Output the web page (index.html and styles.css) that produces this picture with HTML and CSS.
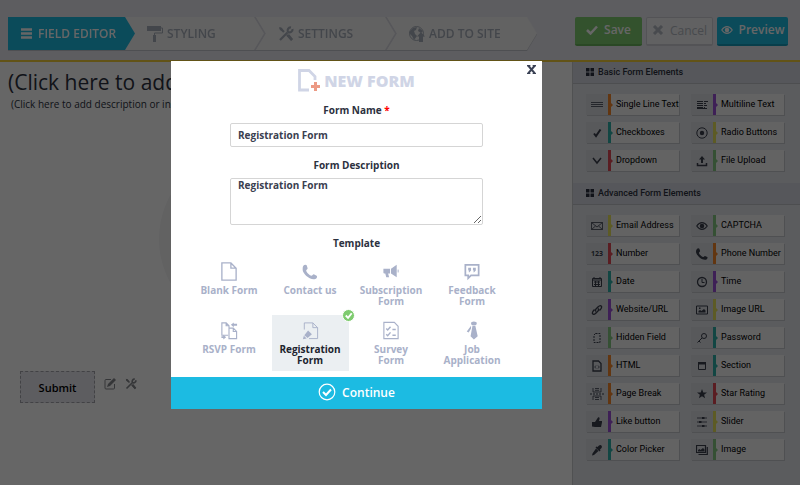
FILE: index.html
```
<!DOCTYPE html>
<html lang="en">
<head>
  <meta charset="UTF-8">
  <meta name="viewport" content="width=device-width, initial-scale=1.0">
  <title>New Form</title>
  <link rel="stylesheet" href="styles.css">
</head>
<body>
  <!-- Icons used more than once -->
  <svg class="sprite" width="0" height="0">
    <symbol id="tools" viewBox="0 0 16 16">
      <path d="M2 14l8-8M10 6a3 3 0 0 1 3-4.500M10 6a3 3 0 0 0 4.500-3M2 2l4 4M9 9l5 5" fill="none" stroke="currentColor" stroke-width="2.200"/>
      <path d="M1 1l3 1 1 2-1 1-2-1zM9 10l2-2 4 5-2 2z" fill="currentColor"/>
    </symbol>
    <symbol id="grid" viewBox="0 0 8 8"><path d="M0 0h3.500v3.500H0zM4.500 0H8v3.500H4.500zM0 4.500h3.500V8H0zM4.500 4.500H8V8H4.500z" fill="currentColor"/></symbol>
    <symbol id="phone" viewBox="0 0 16 16"><path d="M1 1.500C2 0 4 0 4.500 1l1 3c0 1-1.500 1.500-1.500 2.500 0 2 4 5.500 5.500 5.500 1 0 1.500-1.500 2.500-1.500l3 1.500c1 1 0 3-1.500 3.500C7.500 17 0 9 0 5c0-1.500.3-2.700 1-3.500z" fill="currentColor"/></symbol>
    <symbol id="eye" viewBox="0 0 16 12"><path d="M1 6c4-6 10-6 14 0-4 6-10 6-14 0z" fill="none" stroke="currentColor" stroke-width="1.500"/><circle cx="8" cy="6" r="3" fill="currentColor"/></symbol>
  </svg>

  <header class="topbar">
    <nav class="steps">
      <a href="#" class="step active">
        <svg class="step-icon icon-bars" viewBox="0 0 11 11"><path d="M0 1.500h11M0 5.500h11M0 9.500h11" stroke="currentColor" stroke-width="2.500"/></svg>
        FIELD EDITOR
      </a>
      <a href="#" class="step">
        <svg class="step-icon" viewBox="0 0 16 16"><path d="M0 0h14v5H0z" fill="currentColor"/><path d="M14 2h1.500v5H7.500v3" fill="none" stroke="currentColor"/><path d="M6 9h3v7H6z" fill="currentColor"/></svg>
        STYLING
      </a>
      <a href="#" class="step">
        <svg class="step-icon"><use href="#tools"/></svg>
        SETTINGS
      </a>
      <a href="#" class="step last">
        <svg class="step-icon" viewBox="0 0 16 16"><circle cx="7.500" cy="7.500" r="7" fill="none" stroke="currentColor"/><path d="M1 5l3-3 4-1-1 3-2 1 1 3 2 2-3 4-2-4-3-3zM10 2l4 3-2 2-3-2z" fill="currentColor"/><path d="M12 6l4 4.500h-2V16h-4v-5.500H8z" fill="currentColor"/></svg>
        ADD TO SITE
      </a>
    </nav>
    <div class="actions">
      <button type="button" class="btn save"><svg viewBox="0 0 12 10"><path d="M1 5l3.500 3.500L11 1.500" fill="none" stroke="currentColor" stroke-width="2.500"/></svg>Save</button>
      <button type="button" class="btn cancel"><svg viewBox="0 0 12 10"><path d="M2 1l8 8M10 1L2 9" stroke="currentColor" stroke-width="3"/></svg>Cancel</button>
      <button type="button" class="btn preview"><svg><use href="#eye"/></svg>Preview</button>
    </div>
  </header>

  <div class="workspace">
    <main class="canvas">
      <h1>(Click here to add title)</h1>
      <p>(Click here to add description or instructions)</p>
      <div class="drop-hint"></div>
      <div class="submit-row">
        <button type="button" class="submit">Submit</button>
        <svg viewBox="0 0 12 12"><path d="M7 1.500H2Q1 1.500 1 2.500V10q0 1 1 1h7.500q1 0 1-1V6" fill="none" stroke="currentColor"/><path d="M10 0l2 2-6 6-3 1 1-3z" fill="currentColor"/></svg>
        <svg><use href="#tools"/></svg>
      </div>
    </main>

    <aside class="sidebar">
      <h2><svg><use href="#grid"/></svg>Basic Form Elements</h2>
      <div class="elements">
        <button type="button" class="element orange"><span class="icon"><svg viewBox="0 0 12 12"><path d="M0 3.500h12M0 5.500h12M0 7.500h12" stroke="currentColor" stroke-width=".8"/></svg></span><span class="name">Single Line Text</span></button>
        <button type="button" class="element purple"><span class="icon"><svg viewBox="0 0 12 12"><path d="M1 2.500h6M8 2.500h4M1 4.500h6M8 4.500h2M1 6.500h6M8 6.500h3M1 8.500h6M8 8.500h1M1 9.500h10" stroke="currentColor"/></svg></span><span class="name">Multiline Text</span></button>
        <button type="button" class="element teal"><span class="icon"><svg viewBox="0 0 12 12"><path d="M3 6.500l2 2.500 4.500-6.500" fill="none" stroke="currentColor" stroke-width="2"/></svg></span><span class="name">Checkboxes</span></button>
        <button type="button" class="element yellow"><span class="icon"><svg viewBox="0 0 12 12"><circle cx="6" cy="6" r="5.200" fill="none" stroke="currentColor"/><circle cx="6" cy="6" r="2.200" fill="currentColor"/></svg></span><span class="name">Radio Buttons</span></button>
        <button type="button" class="element red"><span class="icon"><svg viewBox="0 0 12 12"><path d="M2 3l4 5 4-5" fill="none" stroke="currentColor" stroke-width="1.500"/></svg></span><span class="name">Dropdown</span></button>
        <button type="button" class="element green"><span class="icon"><svg viewBox="0 0 12 12"><path d="M6 1l3 3.500H7V8H5V4.500H3z" fill="currentColor"/><path d="M1.500 8v2.500h9V8" fill="none" stroke="currentColor" stroke-width="1.500"/></svg></span><span class="name">File Upload</span></button>
      </div>

      <h2><svg><use href="#grid"/></svg>Advanced Form Elements</h2>
      <div class="elements">
        <button type="button" class="element yellow"><span class="icon"><svg viewBox="0 0 12 12"><path d="M.5 2.500h11v7H.5zM.5 2.500L6 7l5.500-4.500M.5 9.500L4.500 6M11.500 9.500L7.500 6" fill="none" stroke="currentColor" stroke-width=".8"/></svg></span><span class="name">Email Address</span></button>
        <button type="button" class="element green"><span class="icon"><svg><use href="#eye"/></svg></span><span class="name">CAPTCHA</span></button>
        <button type="button" class="element red"><span class="icon digits">123</span><span class="name">Number</span></button>
        <button type="button" class="element orange"><span class="icon"><svg><use href="#phone"/></svg></span><span class="name">Phone Number</span></button>
        <button type="button" class="element teal"><span class="icon"><svg viewBox="0 0 12 12"><path d="M1.500 2.500h9v8h-9zM1 4h10M3 1v2M9 1v2M3 6h6M3 8.500h6" fill="none" stroke="currentColor"/><path d="M4.500 5v5M7.500 5v5" stroke="currentColor"/></svg></span><span class="name">Date</span></button>
        <button type="button" class="element purple"><span class="icon"><svg viewBox="0 0 12 12"><circle cx="6" cy="6" r="4.500" fill="none" stroke="currentColor" stroke-width="1.300"/><path d="M6 3v3.500h2.500" fill="none" stroke="currentColor"/></svg></span><span class="name">Time</span></button>
        <button type="button" class="element purple"><span class="icon"><svg viewBox="0 0 12 12"><path d="M5 7.500C3.500 6 5 5 7 3s3-1.500 3.500-.5S10 5 8.500 6.500M7 4.500C8.500 6 7 7 5 9s-3 1.500-3.500.5S2 7 3.500 5.500" fill="none" stroke="currentColor" stroke-width="1.400"/></svg></span><span class="name">Website/URL</span></button>
        <button type="button" class="element yellow"><span class="icon"><svg viewBox="0 0 12 12"><path d="M.5 2h11v8H.5z" fill="none" stroke="currentColor"/><path d="M2.500 8.500V7l1.500-1 1.500 1L8 5l1.500 1.500v2zM3 3.500h1.500V5H3z" fill="currentColor"/></svg></span><span class="name">Image URL</span></button>
        <button type="button" class="element green"><span class="icon"><svg viewBox="0 0 12 12"><path d="M4.500 1.500H9v9H3V3z" fill="none" stroke="currentColor" stroke-dasharray="2 1"/></svg></span><span class="name">Hidden Field</span></button>
        <button type="button" class="element teal"><span class="icon"><svg viewBox="0 0 12 12"><circle cx="8" cy="4" r="2.500" fill="none" stroke="currentColor"/><path d="M6 6l-4.500 4.500M3 9l1.500 1.500" stroke="currentColor"/></svg></span><span class="name">Password</span></button>
        <button type="button" class="element orange"><span class="icon"><svg viewBox="0 0 12 12"><path d="M2 1h5.500L10 3.500V11H2z" fill="none" stroke="currentColor" stroke-width="1.300"/><path d="M5 5.500L3.700 7 5 8.500M7 5.500L8.300 7 7 8.500" fill="none" stroke="currentColor" stroke-width=".8"/></svg></span><span class="name">HTML</span></button>
        <button type="button" class="element teal"><span class="icon"><svg viewBox="0 0 12 12"><path d="M2.500 2.500h7v7h-7z" fill="none" stroke="currentColor"/><path d="M2 2h8v2.500H2z" fill="currentColor"/></svg></span><span class="name">Section</span></button>
        <button type="button" class="element orange"><span class="icon"><svg class="wide" viewBox="0 0 14 12"><path d="M3 0v4h8V0M5 .5h4M5 2.300h4M3 12V8h8v4M5 9.500h4M5 11.500h4" fill="none" stroke="currentColor" stroke-width=".8"/><path d="M0 6h14" stroke="currentColor" stroke-dasharray="2 1"/></svg></span><span class="name">Page Break</span></button>
        <button type="button" class="element red"><span class="icon"><svg viewBox="0 0 12 12"><path d="M6 1l1.300 3.400 3.700.1-2.900 2.300 1 3.500L6 8.200l-3.100 2.100 1-3.500L1 4.500l3.700-.1z" fill="currentColor"/></svg></span><span class="name">Star Rating</span></button>
        <button type="button" class="element purple"><span class="icon"><svg viewBox="0 0 12 12"><path d="M1 6h3l3-4.500c1-.8 2 0 1.500 1.500L8 5h3v1.500L10 11H4L1 10.500z" fill="currentColor"/></svg></span><span class="name">Like button</span></button>
        <button type="button" class="element yellow"><span class="icon"><svg viewBox="0 0 12 12"><path d="M1 2h10M1 6h10M1 10h10" stroke="currentColor" stroke-width=".8"/><path d="M6 1h2.500v2H6zM3 5h2.500v2H3zM6 9h2.500v2H6z" fill="currentColor"/></svg></span><span class="name">Slider</span></button>
        <button type="button" class="element teal"><span class="icon"><svg viewBox="0 0 12 12"><path d="M8 1.500c1.500-1.500 4 .5 2.500 2.500L9 5.500l.5 1-1 1-4-4 1-1 1 .5zM5 4.500L7.500 7 3 11l-2 .5.500-2z" fill="currentColor"/></svg></span><span class="name">Color Picker</span></button>
        <button type="button" class="element green"><span class="icon"><svg viewBox="0 0 12 12"><path d="M.5 1.500h9v7h-9zM11.300 3v7.500H2.500" fill="none" stroke="currentColor" stroke-width="1.200"/><path d="M2 7.500V6l1.500-1 1 1L7 4l1.500 1.500v2z" fill="currentColor"/></svg></span><span class="name">Image</span></button>
      </div>
    </aside>
  </div>

  <div class="overlay"></div>

  <!-- New form popup -->
  <form class="modal">
    <button type="button" class="close" aria-label="Close"><svg viewBox="0 0 8 8"><path d="M1 .5l6 7M7 .5l-6 7" stroke="currentColor" stroke-width="1.800"/><path d="M0 .5h3M5 .5h3M0 7.500h3M5 7.500h3" stroke="currentColor"/></svg></button>
    <h2 class="modal-title">
      <svg viewBox="0 0 22 23"><path d="M11 21H1.500V1.500H11l6 6V11" fill="none" stroke="#d0d5e6" stroke-width="2.800"/><path d="M13 17.500h9M17.500 13v9" stroke="#ec9a84" stroke-width="3"/></svg>
      NEW FORM
    </h2>
    <label for="form-name">Form Name <span class="required">*</span></label>
    <input type="text" id="form-name" value="Registration Form">
    <label for="form-description">Form Description</label>
    <textarea id="form-description">Registration Form</textarea>
    <h3>Template</h3>
    <div class="templates">
      <button type="button" class="template">
        <svg viewBox="0 0 18 20"><path d="M1.500 1h9.500l5.500 5.500V19h-15zM11 1v5.500h5.500" fill="none" stroke="currentColor" stroke-width="1.400"/></svg>
        Blank Form
      </button>
      <button type="button" class="template">
        <svg viewBox="0 0 18 20"><use href="#phone" x="1" y="2" width="16" height="17"/></svg>
        Contact us
      </button>
      <button type="button" class="template">
        <svg viewBox="0 0 18 20"><path d="M1 7h7v5H6l1 4H4l-1-4H2q-1 0-1-1zM9 7l6-4v13l-6-4z" fill="currentColor"/><path d="M16.500 8v3" stroke="currentColor"/></svg>
        Subscription Form
      </button>
      <button type="button" class="template">
        <svg viewBox="0 0 18 20"><path d="M2 3h14v11H8l-3 3v-3H2z" fill="none" stroke="currentColor" stroke-width="1.800"/><path d="M5 6h3v3l-2 2-.5-.5.500-1.500H5zM10 6h3v3l-2 2-.5-.5.500-1.500H10z" fill="currentColor"/></svg>
        Feedback Form
      </button>
      <button type="button" class="template">
        <svg viewBox="0 0 18 20"><path d="M8 15H1.500V2H6l3 3v2M6 2v3h3M9 7.500h4.500L17 11v7.500H9zM13.500 7.500V11H17" fill="none" stroke="currentColor" stroke-width="1.200"/><path d="M11 4l3-2.500V3h3.500v2H14v1.500zM6 17l-3 2.500V18H1v-2h2v-1.500z" fill="currentColor"/></svg>
        RSVP Form
      </button>
      <button type="button" class="template selected">
        <svg viewBox="0 0 18 20"><path d="M3 9V2h9l5 5v11.500H8M12 2v5h5" fill="none" stroke="currentColor"/><path d="M7 10l4 4-4.500 4L3 15zM2.500 15.500l3 3-4 .8z" fill="currentColor"/></svg>
        Registration Form
        <span class="check"><svg viewBox="0 0 12 12"><path d="M3 6l2.500 2.500 4-5" fill="none" stroke="#fff" stroke-width="2"/></svg></span>
      </button>
      <button type="button" class="template">
        <svg viewBox="0 0 18 20"><path d="M1.500 1.500h11l4 4v13h-15z" fill="none" stroke="currentColor" stroke-width="1.200"/><path d="M4 8l1.500 1.500L8.500 6M4 14l1.500 1.500L8.500 12M10.500 9h3.500M10.500 15h3.500" fill="none" stroke="currentColor" stroke-width="1.500"/></svg>
        Survey Form
      </button>
      <button type="button" class="template">
        <svg viewBox="0 0 18 20"><ellipse cx="11" cy="2.500" rx="3" ry="2" fill="currentColor"/><path d="M9.500 5h3l2.500 11-4 3.500L7.500 16zM8 5L3.500 11l2 1L8 8z" fill="currentColor"/></svg>
        Job Application
      </button>
    </div>
    <button type="submit" class="continue">
      <svg viewBox="0 0 18 18"><circle cx="9" cy="9" r="7.800" fill="none" stroke="currentColor" stroke-width="1.200"/><path d="M5 9l3 3 5-5.500" fill="none" stroke="currentColor" stroke-width="2"/></svg>
      Continue
    </button>
  </form>
</body>
</html>
```
FILE: styles.css
```
* {
  box-sizing: border-box;
}

body {
  display: flex;
  flex-direction: column;
  min-height: 100vh;
  margin: 0;
  font-family: "Open Sans", sans-serif;
  color: #2c3140;
  background-color: #fff;
}

button {
  font-family: inherit;
  border: 0;
  padding: 0;
}

svg {
  flex-shrink: 0;
}

.sprite {
  position: absolute;
}

/* Top bar */
.topbar {
  display: flex;
  justify-content: space-between;
  height: 62px;
  padding: 17px 12px 0 8px;
  background-color: #e9e9f0;
  border-bottom: 2px solid #f5cf3a;
}

.steps {
  display: flex;
  height: 33px;
  filter: drop-shadow(0 1px 0 #c4c5cc);
}

.step {
  position: relative;
  display: flex;
  align-items: center;
  gap: 4px;
  width: 141px;
  margin-left: -10px;
  padding-left: 22px;
  font-size: 12px;
  font-weight: 600;
  color: #a9b0bb;
  text-decoration: none;
  white-space: nowrap;
  background-color: #f4f4f5;
  clip-path: polygon(0 0, calc(100% - 10px) 0, 100% 50%, calc(100% - 10px) 100%, 0 100%);
}

/* keeps each arrow tip above the step after it */
.step:nth-child(1) { z-index: 4; }
.step:nth-child(2) { z-index: 3; }
.step:nth-child(3) { z-index: 2; }

.step::after {
  content: "";
  position: absolute;
  top: 0;
  right: 0;
  width: 12px;
  height: 100%;
  background-color: #d9d9e1;
  clip-path: polygon(0 0, 2px 0, 100% 50%, 2px 100%, 0 100%, 10px 50%);
}

.step.active {
  width: 127px;
  margin-left: 0;
  padding-left: 13px;
  gap: 6px;
  color: #fff;
  background-color: #1cbbe2;
}

.step.active::after,
.step.last::after {
  display: none;
}

.step.last {
  width: 150px;
}

.step-icon {
  width: 16px;
  height: 16px;
}

.icon-bars {
  width: 11px;
  height: 11px;
}

.actions {
  display: flex;
  gap: 4px;
}

.btn {
  display: flex;
  align-items: center;
  justify-content: center;
  gap: 6px;
  width: 67px;
  height: 29px;
  padding-bottom: 2px;
  font-size: 12px;
  font-weight: 600;
  color: #fff;
  border-radius: 2px;
}

.btn svg {
  width: 12px;
  height: 10px;
}

.save {
  background-color: #80cc72;
  border-bottom: 2px solid #6ab35c;
}

.cancel {
  font-weight: 400;
  color: #b3b9c2;
  background-color: #f2f2f4;
  border: 1px solid #cfd0d6;
  border-bottom-width: 2px;
}

.preview {
  width: 71px;
  background-color: #1cbbe2;
  border-bottom: 2px solid #159bbc;
}

/* Form canvas */
.workspace {
  display: flex;
  flex: 1;
}

.canvas {
  display: flex;
  flex: 1;
  flex-direction: column;
  min-width: 0;
  overflow: hidden;
  white-space: nowrap;
}

.canvas h1 {
  margin: 5px 0 0 8px;
  font-size: 21px;
  line-height: 30px;
  font-weight: 400;
}

.canvas p {
  margin: 0 0 0 11px;
  font-size: 10px;
  line-height: 14px;
}

.drop-hint {
  width: 180px;
  height: 180px;
  margin: 38px 0 0 159px;
  border-radius: 50%;
  background-color: #f4f4f6;
}

.submit-row {
  display: flex;
  gap: 9px;
  margin: 42px 0 0 20px;
  color: #85878c;
}

.submit-row svg {
  width: 12px;
  height: 12px;
  margin-top: 7px;
}

.submit {
  width: 75px;
  height: 32px;
  font-size: 11px;
  font-weight: 600;
  color: #000;
  background-color: #e9e9f0;
  border: 1px dashed #a5a6ad;
}

/* Sidebar */
.sidebar {
  width: 228px;
  background-color: #e4e6eb;
  border-left: 1px solid #c9cacd;
}

.sidebar h2 {
  display: flex;
  align-items: center;
  gap: 4px;
  height: 22px;
  margin: 0;
  padding: 0 0 2px 13px;
  font-family: Roboto, sans-serif;
  font-size: 9px;
  font-weight: 500;
  background-color: #d7dae3;
  border-bottom: 1px solid #c0c2c9;
}

.sidebar h2 svg {
  width: 8px;
  height: 8px;
}

.elements {
  display: grid;
  grid-template-columns: 93px 93px;
  gap: 7px 12px;
  padding: 10px 13px 12px;
}

.element {
  display: flex;
  height: 21px;
  color: #000;
  background-color: #f7f7f8;
  box-shadow: 1px 1px 0 #c6c8ce;
}

.element .icon {
  display: flex;
  flex-shrink: 0;
  align-items: center;
  justify-content: center;
  width: 22px;
  height: 21px;
  color: #3a3f4c;
  background-color: #dcdee4;
}

.icon svg {
  width: 12px;
  height: 12px;
}

.icon .wide {
  width: 14px;
}

.digits {
  font-size: 7px;
  font-weight: 700;
}

.element .name {
  position: relative;
  flex: 1;
  padding-left: 5px;
  font-family: Roboto, sans-serif;
  font-size: 9px;
  line-height: 20px;
  text-align: left;
  white-space: nowrap;
  border-left: 3px solid var(--mark);
}

/* small arrow on the coloured bar */
.element .name::before {
  content: "";
  position: absolute;
  left: 0;
  top: 9px;
  border: 2px solid transparent;
  border-left-color: var(--mark);
  border-right-width: 0;
}

.orange { --mark: #f5872b; }
.purple { --mark: #9b51d6; }
.teal { --mark: #2fb0a8; }
.yellow { --mark: #e9e35c; }
.red { --mark: #e04a55; }
.green { --mark: #86c983; }

/* Popup */
.overlay {
  position: fixed;
  inset: 0;
  z-index: 5;
  background-color: rgba(0, 0, 0, 0.6);
}

.modal {
  position: absolute;
  top: 61px;
  left: 171px;
  z-index: 10;
  display: flex;
  flex-direction: column;
  align-items: center;
  width: 371px;
  background-color: #fff;
}

.close {
  position: absolute;
  top: 4px;
  right: 6px;
  color: #3a4154;
  background: none;
  line-height: 0;
}

.close svg {
  width: 9px;
  height: 9px;
}

.modal-title {
  display: flex;
  align-items: center;
  gap: 4px;
  height: 23px;
  margin: 8px 0;
  font-size: 16px;
  line-height: 20px;
  font-weight: 800;
  color: #d0d5e6;
}

.modal-title svg {
  width: 22px;
  height: 23px;
}

.modal label,
.modal h3 {
  margin: 0;
  font-size: 10px;
  line-height: 20px;
  font-weight: 700;
}

.required {
  color: #f00;
}

.modal input,
.modal textarea {
  width: 253px;
  margin: 3px 0 8px;
  padding: 0 7px;
  font-family: inherit;
  font-size: 10px;
  font-weight: 700;
  color: #3a4050;
  border: 1px solid #d5d5d5;
  border-radius: 2px;
}

.modal input {
  height: 24px;
}

.modal textarea {
  height: 47px;
  line-height: 12px;
}

.templates {
  display: grid;
  grid-template-columns: repeat(4, 77px);
  gap: 3px 4px;
  margin: 3px 12px 6px 0;
}

.template {
  position: relative;
  display: flex;
  flex-direction: column;
  align-items: center;
  height: 56px;
  padding: 6px 8px 0;
  font-size: 10px;
  line-height: 11px;
  font-weight: 700;
  color: #a9b1c9;
  background: none;
}

.template > svg {
  width: 18px;
  height: 19px;
  margin-bottom: 4px;
}

.template.selected {
  color: #20242e;
  background-color: #ebeff2;
}

.selected > svg {
  color: #a9b1c9;
}

.check {
  position: absolute;
  top: -6px;
  right: -6px;
  width: 13px;
  height: 13px;
  border: 1px solid #fff;
  border-radius: 50%;
  background-color: #7ecb6f;
  line-height: 0;
}

.continue {
  display: flex;
  align-items: center;
  justify-content: center;
  gap: 6px;
  align-self: stretch;
  height: 32px;
  padding-bottom: 2px;
  font-size: 12px;
  font-weight: 600;
  color: #fff;
  background-color: #1cbbe2;
}

.continue svg {
  width: 18px;
  height: 18px;
}
```
